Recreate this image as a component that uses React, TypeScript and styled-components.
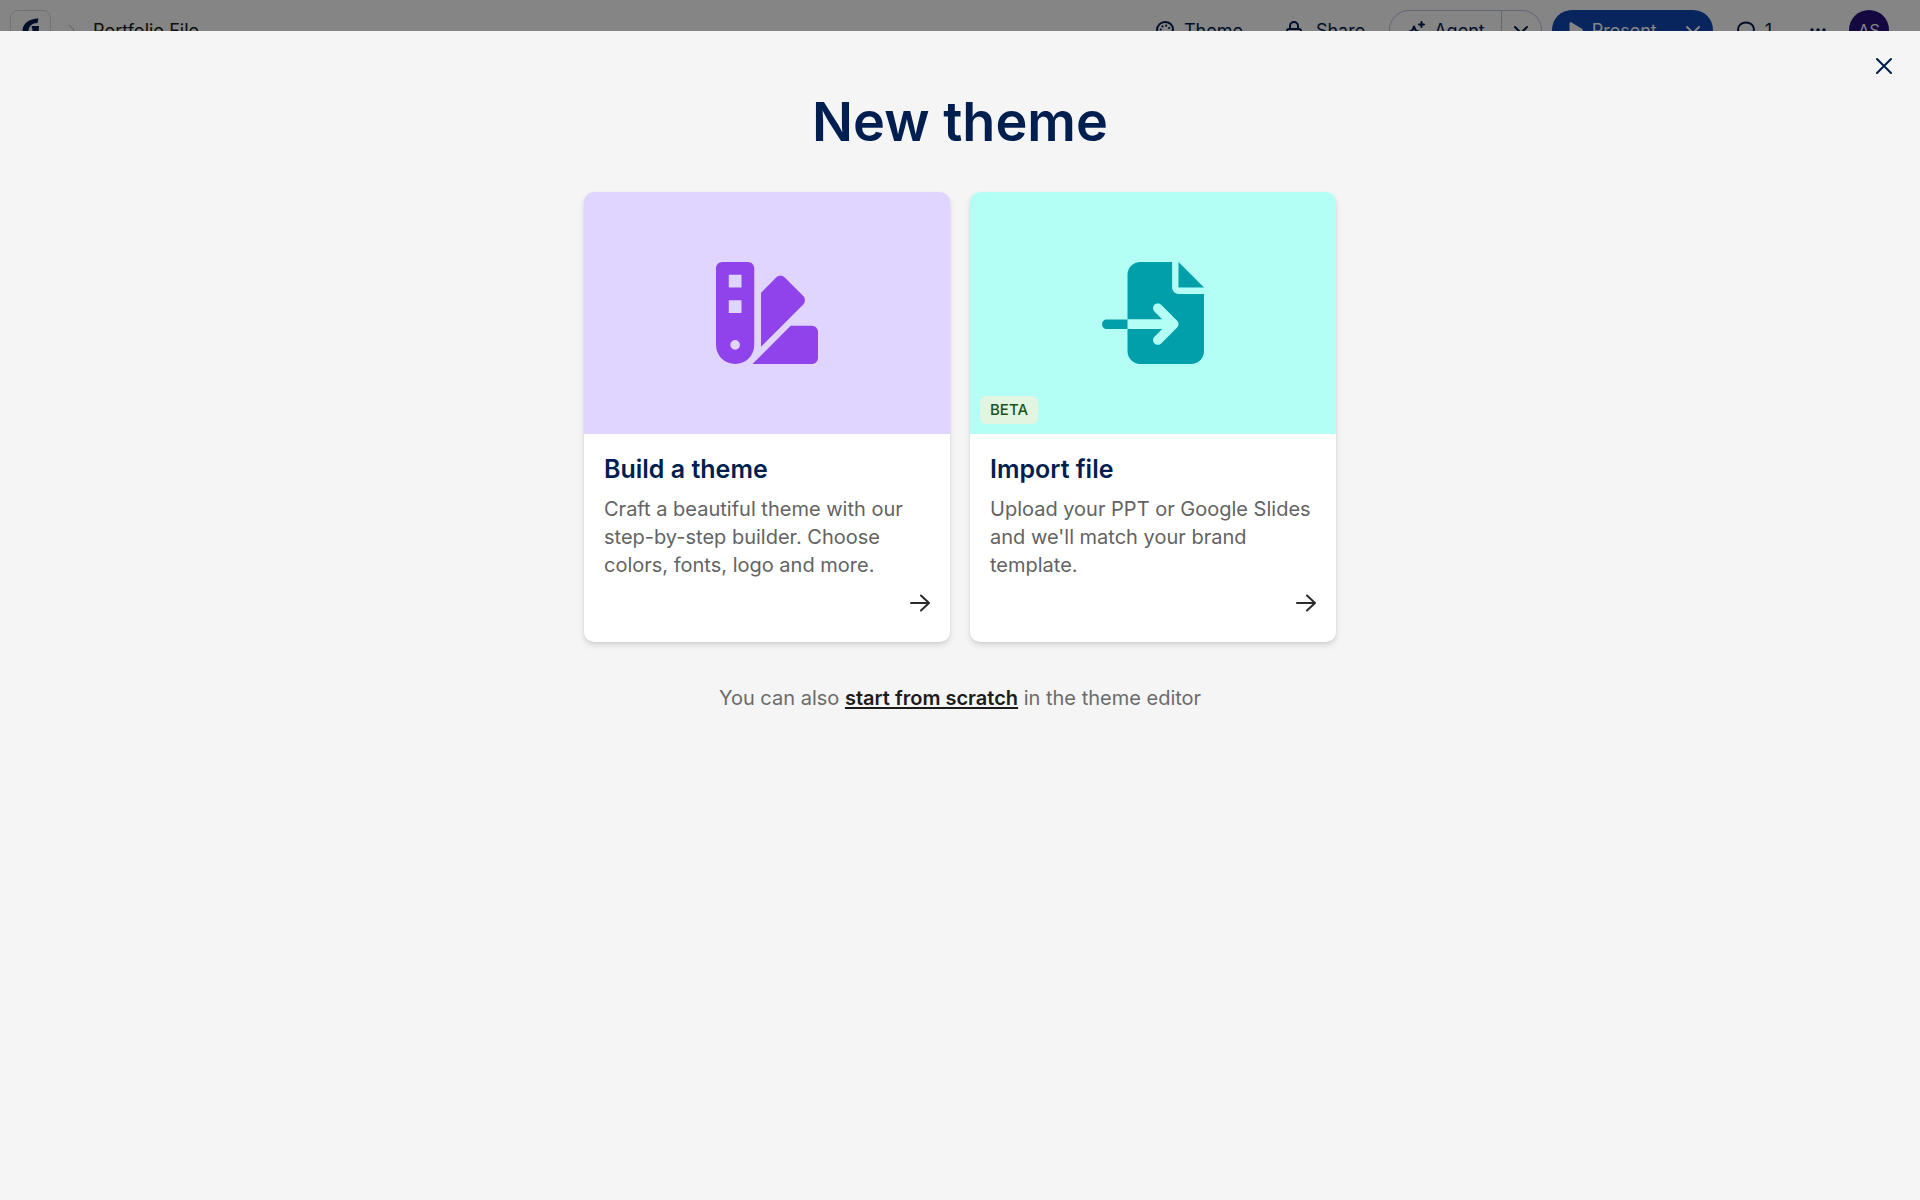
import React from "react";
import styled, { createGlobalStyle } from "styled-components";

const GlobalStyle = createGlobalStyle`
  *, *::before, *::after { box-sizing: border-box; }
  body {
    margin: 0;
    min-height: 100vh;
    background: #fff;
    font-family: Inter, "Liberation Sans", sans-serif;
    color: #001e50;
    overflow: hidden;
  }
  button { font: inherit; color: inherit; border: 0; padding: 0; background: none; cursor: pointer; }
  svg { display: block; flex: none; }
`;

const TopBar = styled.header`
  display: flex;
  align-items: center;
  justify-content: space-between;
  height: 60px;
  padding: 0 31px 0 10px;
  font-size: 18px;
`;

const Breadcrumbs = styled.nav`
  display: flex;
  align-items: center;
  gap: 16px;
  color: #1c1c1c;
`;

const LogoButton = styled.button`
  display: grid;
  place-items: center;
  width: 41px;
  height: 40px;
  border: 1px solid #d8d8d8;
  border-radius: 8px;
`;

const Actions = styled.div`
  display: flex;
  align-items: center;
`;

const TextAction = styled.button<{ $gap?: number; $space: number }>`
  display: flex;
  align-items: center;
  gap: ${(p) => p.$gap ?? 8}px;
  height: 40px;
  margin-right: ${(p) => p.$space}px;
`;

const SplitButton = styled.div<{ $primary?: boolean }>`
  display: flex;
  height: 40px;
  margin-right: ${(p) => (p.$primary ? 24 : 10)}px;
  overflow: hidden;
  border: ${(p) => (p.$primary ? "0" : "1px solid #bcc4e0")};
  border-radius: 20px;
  background: ${(p) => (p.$primary ? "#1148b4" : "transparent")};
  color: ${(p) => (p.$primary ? "#fff" : "inherit")};
`;

const SplitMain = styled.button<{ $primary?: boolean }>`
  display: flex;
  align-items: center;
  gap: 8px;
  padding: 0 16px;
`;

const SplitToggle = styled.button<{ $divided?: boolean }>`
  display: grid;
  place-items: center;
  width: 40px;
  border-left: ${(p) => (p.$divided ? "1px solid #bcc4e0" : "0")};
`;

const Avatar = styled.button`
  width: 40px;
  height: 40px;
  border-radius: 50%;
  background: #2a107c;
  color: #fff;
  font-size: 16px;
`;

const Backdrop = styled.div`
  position: fixed;
  inset: 0;
  padding-top: 31px;
  background: rgba(0, 0, 0, 0.48);
`;

const Dialog = styled.section`
  height: 100%;
  padding: 15px 16px 40px;
  overflow: auto;
  background: #f5f5f5;
`;

const DialogTop = styled.div`
  display: flex;
  justify-content: flex-end;
`;

const CloseButton = styled.button`
  display: grid;
  place-items: center;
  width: 40px;
  height: 40px;
`;

const Content = styled.div`
  display: flex;
  flex-direction: column;
  align-items: center;
  max-width: 752px;
  margin: 0 auto;
`;

const Title = styled.h1`
  margin: 0 0 34px;
  font-size: 54px;
  font-weight: 600;
  line-height: 72px;
`;

const Choices = styled.div`
  display: grid;
  grid-template-columns: repeat(2, 1fr);
  gap: 20px;
  width: 100%;
`;

const Choice = styled.button`
  display: flex;
  flex-direction: column;
  overflow: hidden;
  border-radius: 10px;
  background: #fff;
  box-shadow: 0 4px 6px rgba(0, 0, 0, 0.1), 0 1px 3px rgba(0, 0, 0, 0.08);
  text-align: left;
`;

const Art = styled.span<{ $bg: string; $fg: string }>`
  position: relative;
  display: grid;
  place-items: center;
  width: 100%;
  height: 242px;
  background: ${(p) => p.$bg};
  color: ${(p) => p.$fg};
`;

const Badge = styled.span`
  position: absolute;
  left: 10px;
  bottom: 10px;
  padding: 0 10px;
  border-radius: 6px;
  background: #e1f5e0;
  color: #1b531f;
  font-size: 15px;
  font-weight: 500;
  line-height: 28px;
`;

const ChoiceBody = styled.span`
  display: flex;
  flex: 1;
  flex-direction: column;
  width: 100%;
  padding: 18px 20px 27px;
`;

const ChoiceTitle = styled.span`
  margin-bottom: 9px;
  font-size: 25px;
  font-weight: 600;
  line-height: 34px;
`;

const ChoiceText = styled.span`
  margin-bottom: 12px;
  color: #636363;
  font-size: 20px;
  line-height: 28px;
`;

const ArrowSlot = styled.span`
  display: flex;
  justify-content: flex-end;
  margin-top: auto;
  color: #2b2b2b;
`;

const Footnote = styled.p`
  margin: 42px 0 0;
  color: #6b6b6b;
  font-size: 20px;
  line-height: 28px;
`;

const ScratchLink = styled.a`
  color: #1c1c1c;
  font-weight: 600;
  text-decoration: underline;
  text-decoration-thickness: 2px;
  text-underline-offset: 2px;
  text-decoration-skip-ink: none;
`;

const stroke = {
  fill: "none",
  stroke: "currentColor",
  strokeWidth: 2,
  strokeLinecap: "round" as const,
  strokeLinejoin: "round" as const,
};

const LogoMark = () => (
  <svg width="20" height="24" viewBox="0 0 20 24" fill="#001e50" aria-hidden="true">
    <path d="M17.500.500 16.500 5C11 5 7.500 8.500 7.500 13c0 3 1.500 5 4 5v-6L10.500 8H18l-1 15C7 24 1.500 19 1.500 13 1.500 5.500 8 .500 17.500.500Z" />
  </svg>
);

const ChevronRight = () => (
  <svg width="10" height="12" viewBox="0 0 10 12" {...stroke} stroke="#b4b4b4" strokeWidth="1" aria-hidden="true">
    <path d="m2 1 5 5-5 5" />
  </svg>
);

const ChevronDown = () => (
  <svg width="16" height="10" viewBox="0 0 16 10" {...stroke} aria-hidden="true">
    <path d="m2 2 6 6 6-6" />
  </svg>
);

const PaletteIcon = () => (
  <svg width="18" height="18" viewBox="1 1 18 18" {...stroke} aria-hidden="true">
    <path d="M10 2a8 8 0 1 0 0 16c2 0 2.400-1.400 1.700-2.800-.8-1.700.2-3.200 2-3.200h1.900c1.500 0 2.400-1 2.400-2.600C18 5 14.500 2 10 2Z" />
    <g fill="currentColor" stroke="none">
      <circle cx="5.800" cy="9.500" r="1.100" />
      <circle cx="7.500" cy="6.400" r="1.100" />
      <circle cx="11.200" cy="5.700" r="1.100" />
      <circle cx="14.200" cy="8" r="1.100" />
    </g>
  </svg>
);

const LockIcon = () => (
  <svg width="16" height="20" viewBox="1 0 16 20" {...stroke} aria-hidden="true">
    <path d="M5 9V6a4 4 0 0 1 8 0v3" />
    <rect x="2" y="9" width="14" height="10" rx="2" />
  </svg>
);

const SparkleIcon = () => (
  <svg width="20" height="20" viewBox="0 0 20 20" {...stroke} aria-hidden="true">
    <path d="M8 6.500 9.700 10.300 14.500 12.500 9.700 14.700 8 19l-1.700-4.300L1.500 12.500 6.300 10.300Z" />
    <path d="M15.500 2v5M13 4.500h5" />
  </svg>
);

const PlayIcon = () => (
  <svg width="16" height="16" viewBox="0 0 16 16" fill="currentColor" aria-hidden="true">
    <path d="M1.500 1.200v13.600c0 .8.900 1.300 1.600.9l11.300-6.800c.7-.4.7-1.400 0-1.800L3.100.3c-.7-.4-1.600.1-1.600.9Z" />
  </svg>
);

const CommentIcon = () => (
  <svg width="18" height="18" viewBox="1 0 18 18" {...stroke} aria-hidden="true">
    <path d="M10 1.500c4.600 0 8 3 8 7s-3.400 7-8 7c-1.200 0-2.300-.2-3.300-.5L2.700 17l.9-3.700C2.500 12 2 10.400 2 8.500c0-4 3.400-7 8-7Z" />
  </svg>
);

const DotsIcon = () => (
  <svg width="16" height="4" viewBox="0 0 16 4" fill="currentColor" aria-hidden="true">
    <circle cx="2" cy="2" r="1.700" />
    <circle cx="8" cy="2" r="1.700" />
    <circle cx="14" cy="2" r="1.700" />
  </svg>
);

const CloseIcon = () => (
  <svg width="18" height="18" viewBox="0 0 18 18" {...stroke} aria-hidden="true">
    <path d="m2 2 14 14M16 2 2 16" />
  </svg>
);

const ArrowIcon = () => (
  <svg width="20" height="24" viewBox="0 0 20 24" {...stroke} aria-hidden="true">
    <path d="M1 12h18M11 4.500l8 7.500-8 7.500" />
  </svg>
);

const SwatchbookIcon = () => (
  <svg width="102" height="102" viewBox="0 0 512 512" fill="currentColor" aria-hidden="true">
    <path
      fillRule="evenodd"
      d="M32 0H160c17.700 0 32 14.300 32 32V416a96 96 0 0 1-192 0V32C0 14.300 14.300 0 32 0ZM64 64V128H128V64ZM64 192V256H128V192ZM96 392a24 24 0 1 0 0 48 24 24 0 0 0 0-48Z"
    />
    <path d="M226 154l75-75.400c12.500-12.500 32.800-12.500 45.300 0l90.500 90.500c12.500 12.500 12.500 32.800 0 45.300L226 425Z" />
    <path d="M375 320H480c17.700 0 32 14.300 32 32V480c0 17.700-14.300 32-32 32H183Z" />
  </svg>
);

const FileImportIcon = () => (
  <svg width="102" height="102" viewBox="0 0 512 512" fill="currentColor" aria-hidden="true">
    <path d="M128 64c0-35.300 28.700-64 64-64H352V128c0 17.700 14.300 32 32 32H512V448c0 35.300-28.700 64-64 64H192c-35.300 0-64-28.700-64-64V336H302.100l-39 39c-9.400 9.400-9.400 24.600 0 33.900s24.600 9.400 33.900 0l80-80c9.400-9.400 9.400-24.600 0-33.900l-80-80c-9.400-9.400-24.600-9.400-33.900 0s-9.400 24.600 0 33.900l39 39H128V64Zm0 224v48H24c-13.300 0-24-10.700-24-24s10.700-24 24-24H128ZM512 128H384V0L512 128Z" />
  </svg>
);

const choices = [
  {
    title: "Build a theme",
    text: "Craft a beautiful theme with our step-by-step builder. Choose colors, fonts, logo and more.",
    bg: "#dfd5ff",
    fg: "#9042eb",
    icon: <SwatchbookIcon />,
  },
  {
    title: "Import file",
    text: "Upload your PPT or Google Slides and we'll match your brand template.",
    bg: "#b4fff5",
    fg: "#009faa",
    icon: <FileImportIcon />,
    badge: "BETA",
  },
];

export default function App() {
  return (
    <>
      <GlobalStyle />
      <TopBar>
        <Breadcrumbs aria-label="Breadcrumb">
          <LogoButton aria-label="Home">
            <LogoMark />
          </LogoButton>
          <ChevronRight />
          <span>Portfolio File</span>
        </Breadcrumbs>
        <Actions>
          <TextAction $gap={10} $space={43}>
            <PaletteIcon />
            Theme
          </TextAction>
          <TextAction $gap={14} $space={24}>
            <LockIcon />
            Share
          </TextAction>
          <SplitButton>
            <SplitMain>
              <SparkleIcon />
              Agent
            </SplitMain>
            <SplitToggle $divided aria-label="Agent options">
              <ChevronDown />
            </SplitToggle>
          </SplitButton>
          <SplitButton $primary>
            <SplitMain $primary>
              <PlayIcon />
              Present
            </SplitMain>
            <SplitToggle aria-label="Present options">
              <ChevronDown />
            </SplitToggle>
          </SplitButton>
          <TextAction $gap={10} $space={38}>
            <CommentIcon />1
          </TextAction>
          <TextAction $space={23} aria-label="More">
            <DotsIcon />
          </TextAction>
          <Avatar>AS</Avatar>
        </Actions>
      </TopBar>

      <Backdrop>
        <Dialog role="dialog" aria-modal="true" aria-labelledby="dialog-title">
          <DialogTop>
            <CloseButton aria-label="Close">
              <CloseIcon />
            </CloseButton>
          </DialogTop>
          <Content>
            <Title id="dialog-title">New theme</Title>
            <Choices>
              {choices.map((c) => (
                <Choice key={c.title}>
                  <Art $bg={c.bg} $fg={c.fg}>
                    {c.icon}
                    {c.badge && <Badge>{c.badge}</Badge>}
                  </Art>
                  <ChoiceBody>
                    <ChoiceTitle>{c.title}</ChoiceTitle>
                    <ChoiceText>{c.text}</ChoiceText>
                    <ArrowSlot>
                      <ArrowIcon />
                    </ArrowSlot>
                  </ChoiceBody>
                </Choice>
              ))}
            </Choices>
            <Footnote>
              You can also <ScratchLink href="#editor">start from scratch</ScratchLink> in the theme editor
            </Footnote>
          </Content>
        </Dialog>
      </Backdrop>
    </>
  );
}
